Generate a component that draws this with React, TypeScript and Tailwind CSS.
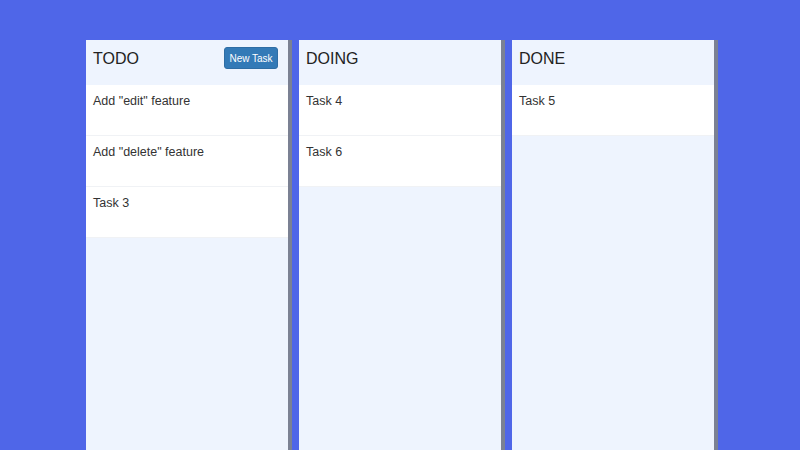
import React from "react";

const columns: { title: string; tasks: string[]; button?: boolean }[] = [
  { title: "TODO", tasks: ['Add "edit" feature', 'Add "delete" feature', "Task 3"], button: true },
  { title: "DOING", tasks: ["Task 4", "Task 6"] },
  { title: "DONE", tasks: ["Task 5"] },
];

export default function App() {
  return (
    <div
      className="w-[800px] h-[450px] overflow-hidden bg-[#4f66e8] flex justify-center gap-[11px] pt-[40px]"
      style={{ fontFamily: '"Liberation Sans", Arial, sans-serif' }}
    >
      {columns.map((col) => (
        <div
          key={col.title}
          className="w-[202px] h-[420px] bg-[#eef4fe] shadow-[4px_0_0_#7b8193] flex flex-col"
        >
          <div className="h-[45px] flex items-start justify-between px-[7px] pt-[7px] shrink-0">
            <span className="text-[16px] text-[#222] leading-[22px] mt-[1px]">{col.title}</span>
            <div className="flex items-center h-[22px]">
              {col.button && (
                <button className="bg-[#337ab7] text-white text-[10px] rounded-[3px] w-[54px] h-[22px] mr-[3px] border border-[#2e6da4]">
                  New Task
                </button>
              )}
            </div>
          </div>
          {col.tasks.map((t) => (
            <div
              key={t}
              className="h-[51px] bg-white border-b border-[#f0f2f5] px-[7px] pt-[7px] text-[12.5px] leading-[18px] text-[#333] shrink-0"
            >
              {t}
            </div>
          ))}
        </div>
      ))}
    </div>
  );
}
